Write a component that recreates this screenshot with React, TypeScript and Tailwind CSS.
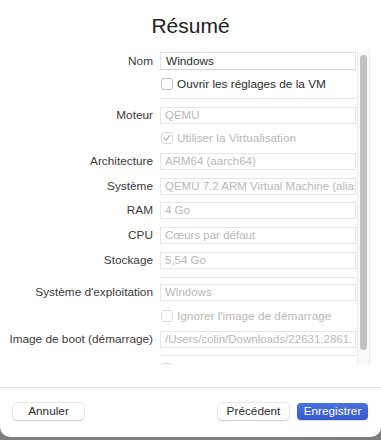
const font = { fontFamily: '"Liberation Sans", Arial, sans-serif' };

function Field({ label, value, dim = true, top }: { label: string; value: string; dim?: boolean; top: string }) {
  return (
    <div className={`flex items-center ${top}`}>
      <div className="w-[153px] shrink-0 text-right text-[11.8px] leading-[15px] text-[#3a3a3a] whitespace-nowrap">{label}</div>
      <div
        className={`ml-[7px] h-[17px] w-[196px] overflow-hidden whitespace-nowrap border border-[#e6e6e6] bg-white pl-[4px] text-[11.5px] leading-[15px] ${
          dim ? "text-[#b8b8b8]" : "text-[#2b2b2b]"
        }`}
      >
        {value}
      </div>
    </div>
  );
}

function Check({ label, checked = false, dim = true, top }: { label?: string; checked?: boolean; dim?: boolean; top: string }) {
  return (
    <div className={`flex h-[14px] items-center pl-[161px] ${top}`}>
      <div
        className={`flex h-[12px] w-[12px] items-center justify-center rounded-[3px] border ${
          dim ? "border-[#dadada]" : "border-[#bdbdbd]"
        } bg-white`}
      >
        {checked && (
          <svg width="8" height="8" viewBox="0 0 8 8">
            <path d="M1.2 4.2 L3.2 6.2 L6.8 1.5" fill="none" stroke="#b8b8b8" strokeWidth="1.3" strokeLinecap="round" strokeLinejoin="round" />
          </svg>
        )}
      </div>
      {label && (
        <span className={`ml-[4px] text-[11.8px] leading-[14px] ${dim ? "text-[#b8b8b8]" : "text-[#2b2b2b]"}`}>{label}</span>
      )}
    </div>
  );
}

function Sep({ top }: { top: string }) {
  return <div className={`ml-[160px] h-px w-[196px] bg-[#e6e6e6] ${top}`} />;
}

export default function App() {
  return (
    <div className="h-[440px] w-[381px] bg-[#7d7d7d]" style={font}>
      <div className="flex h-[437px] flex-col rounded-b-[10px] bg-white">
        <div className="flex h-[50px] items-center justify-center pt-[2px] text-[21px] text-[#222]">Résumé</div>

        <div className="flex h-[315px]">
          <div className="w-[357px] overflow-hidden">
            <div className="mt-[2px] flex items-center">
              <div className="w-[153px] shrink-0 text-right text-[11.8px] leading-[15px] text-[#3a3a3a]">Nom</div>
              <div className="ml-[7px] h-[18px] w-[196px] border border-[#e2e2e2] border-b-[#d4d4d4] bg-white pl-[5px] text-[11.8px] leading-[16px] text-[#2b2b2b]">
                Windows
              </div>
            </div>
            <Check label="Ouvrir les réglages de la VM" dim={false} top="mt-[7px]" />
            <Sep top="mt-[7px]" />
            <Field label="Moteur" value="QEMU" top="mt-[8px]" />
            <Check label="Utiliser la Virtualisation" checked top="mt-[7px]" />
            <Field label="Architecture" value="ARM64 (aarch64)" top="mt-[8px]" />
            <Field label="Système" value="QEMU 7.2 ARM Virtual Machine (alias" top="mt-[8px]" />
            <Field label="RAM" value="4 Go" top="mt-[7px]" />
            <Field label="CPU" value="Cœurs par défaut" top="mt-[8px]" />
            <Field label="Stockage" value="5,54 Go" top="mt-[8px]" />
            <Sep top="mt-[8px]" />
            <Field label="Système d'exploitation" value="Windows" top="mt-[6px]" />
            <Check label="Ignorer l'image de démarrage" top="mt-[8px]" />
            <Field label="Image de boot (démarrage)" value="/Users/colin/Downloads/22631.2861." top="mt-[8px]" />
            <Sep top="mt-[7px]" />
            <Check top="mt-[6px]" />
          </div>
          <div className="w-[13px] border-l border-r border-[#ececec] bg-[#fafafa] pl-[2px] pt-[5px]">
            <div className="h-[295px] w-[7px] rounded-full bg-[#c2c2c2]" />
          </div>
        </div>

        <div className="mt-[22px] h-px w-full bg-[#e4e4e4]" />

        <div className="mt-[15px] flex items-center px-[13px]">
          <button className="h-[17px] w-[71px] rounded-[4px] bg-white text-[11.8px] leading-[17px] text-[#2b2b2b] shadow-[0_0_0_0.5px_rgba(0,0,0,0.18),0_1px_1px_rgba(0,0,0,0.12)]">
            Annuler
          </button>
          <div className="flex-1" />
          <button className="h-[17px] w-[71px] rounded-[4px] bg-white text-[11.8px] leading-[17px] text-[#2b2b2b] shadow-[0_0_0_0.5px_rgba(0,0,0,0.18),0_1px_1px_rgba(0,0,0,0.12)]">
            Précédent
          </button>
          <button className="ml-[8px] h-[17px] w-[71px] rounded-[4px] bg-gradient-to-b from-[#4a72e0] to-[#3559cc] text-[11.8px] leading-[17px] text-white shadow-[0_1px_1px_rgba(0,0,0,0.15)]">
            Enregistrer
          </button>
        </div>
      </div>
    </div>
  );
}
